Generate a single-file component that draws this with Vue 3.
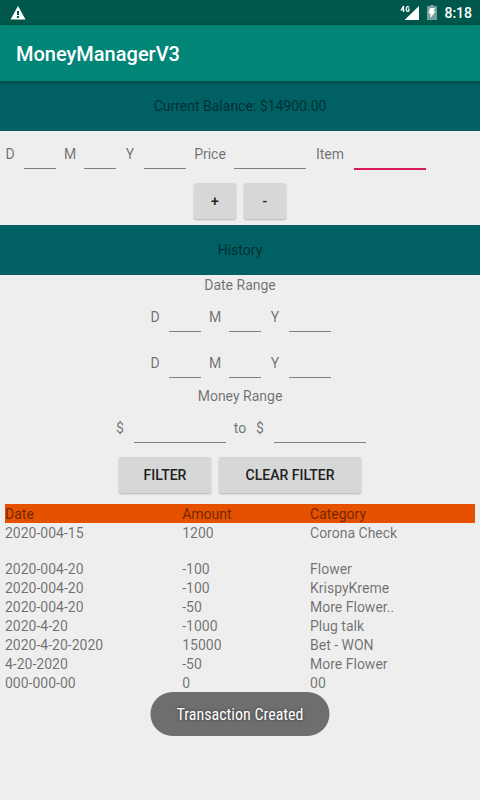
<script setup>
import { reactive } from 'vue'

const entry = reactive({ day: '', month: '', year: '', price: '', item: '' })
const entryFields = [
  { key: 'day', label: 'D', size: 'short' },
  { key: 'month', label: 'M', size: 'short' },
  { key: 'year', label: 'Y', size: 'year' },
  { key: 'price', label: 'Price', size: 'long' },
  { key: 'item', label: 'Item', size: 'long' },
]

const range = reactive({
  from: { day: '', month: '', year: '' },
  until: { day: '', month: '', year: '' },
  min: '',
  max: '',
})
const dateFields = entryFields.slice(0, 3)

const transactions = [
  { date: '2020-004-15', amount: '1200', category: 'Corona Check\n\u00a0' },
  { date: '2020-004-20', amount: '-100', category: 'Flower' },
  { date: '2020-004-20', amount: '-100', category: 'KrispyKreme' },
  { date: '2020-004-20', amount: '-50', category: 'More Flower..' },
  { date: '2020-4-20', amount: '-1000', category: 'Plug talk' },
  { date: '2020-4-20-2020', amount: '15000', category: 'Bet - WON' },
  { date: '4-20-2020', amount: '-50', category: 'More Flower' },
  { date: '000-000-00', amount: '0', category: '00' },
]
</script>

<template>
  <div class="screen">
    <div class="status">
      <svg class="warning" viewBox="0 0 16 14" width="16" height="14" aria-hidden="true">
        <path fill="#fff" fill-rule="evenodd" d="M8 0 15.5 13.5H.5ZM7 5v4h2V5ZM7 10v2h2v-2Z" />
      </svg>
      <div class="status-right">
        <svg class="signal" viewBox="0 0 20 16" width="20" height="16" aria-hidden="true">
          <path fill="#fff" d="M19 1v14H4.500Z" />
          <path fill="#00574b" d="M0 0H10.500V8H0Z" />
          <path fill="none" stroke="#fff" stroke-width="1.200" d="M3.500 7V1L1.300 5H4.800M9 2.500C8.300 1 6.200 1.200 6.200 4S8.300 6.900 9 5.600V4.200H7.700" />
        </svg>
        <svg class="battery" viewBox="0 0 10 16" width="10" height="16" aria-hidden="true">
          <path fill="#fff" fill-opacity=".45" d="M3 0h4v1h3v14H0V1h3Z" />
          <path fill="#fff" d="M3 3h5L6.500 6.500H8.500L3.500 13V8.500H1.500Z" />
        </svg>
        <time>8:18</time>
      </div>
    </div>
    <header class="app-bar"><h1>MoneyManagerV3</h1></header>

    <main>
      <div class="band">Current Balance: $14900.00</div>

      <form @submit.prevent>
        <div class="fields">
          <template v-for="field in entryFields" :key="field.key">
            <label :class="{ wide: field.size === 'long' }" :for="`entry-${field.key}`">{{ field.label }}</label>
            <input
              :id="`entry-${field.key}`"
              v-model="entry[field.key]"
              :class="[field.size, { active: field.key === 'item' }]"
              type="text"
            />
          </template>
        </div>
        <div class="actions">
          <button class="sign" type="button">+</button>
          <button class="sign" type="button">-</button>
        </div>
      </form>

      <h2 class="band">History</h2>

      <form @submit.prevent>
        <p class="caption">Date Range</p>
        <div v-for="edge in ['from', 'until']" :key="edge" class="fields centered">
          <template v-for="field in dateFields" :key="field.key">
            <label :for="`${edge}-${field.key}`">{{ field.label }}</label>
            <input :id="`${edge}-${field.key}`" v-model="range[edge][field.key]" :class="field.size" type="text" />
          </template>
        </div>
        <p class="caption">Money Range</p>
        <div class="fields centered">
          <label for="money-min">$</label>
          <input id="money-min" v-model="range.min" class="money" type="text" />
          <span class="word">to</span>
          <label for="money-max">$</label>
          <input id="money-max" v-model="range.max" class="money" type="text" />
        </div>
        <div class="actions">
          <button class="filter" type="submit">FILTER</button>
          <button class="clear" type="reset">CLEAR FILTER</button>
        </div>
      </form>

      <div class="history">
        <table>
          <thead>
            <tr>
              <th class="date" scope="col">Date</th>
              <th class="amount" scope="col">Amount</th>
              <th scope="col">Category</th>
            </tr>
          </thead>
          <tbody>
            <tr v-for="(row, index) in transactions" :key="index">
              <td>{{ row.date }}</td>
              <td>{{ row.amount }}</td>
              <td class="category">{{ row.category }}</td>
            </tr>
          </tbody>
        </table>
      </div>
    </main>

    <div class="toast" role="status">Transaction Created</div>
  </div>
</template>

<style>
body {
  margin: 0;
  background: #eee;
}
</style>

<style scoped>
.screen {
  min-height: 100vh;
  background: #eee;
  color: rgba(0, 0, 0, 0.54);
  font: 14px/17px Roboto, sans-serif;
}
.status {
  display: flex;
  align-items: center;
  justify-content: space-between;
  height: 25px;
  padding: 0 8px 0 10px;
  background: #00574b;
  color: #fff;
}
.status-right {
  display: flex;
  align-items: center;
  gap: 7px;
}
.status-right time {
  padding-top: 2px;
  font-weight: 500;
}
.app-bar {
  position: relative;
  display: flex;
  align-items: center;
  height: 56px;
  padding: 0 16px;
  background: #008577;
  color: #fff;
  box-shadow: 0 1px 4px rgba(0, 0, 0, 0.4);
}
h1 {
  margin: 0;
  padding-top: 2px;
  font-size: 20px;
  line-height: 24px;
  font-weight: 500;
}
.band {
  display: flex;
  align-items: center;
  justify-content: center;
  height: 50px;
  margin: 0;
  background: #006064;
  font-size: 14px;
  font-weight: 400;
}
.fields {
  display: flex;
  align-items: flex-start;
  height: 46px;
}
.centered {
  justify-content: center;
}
label,
.word {
  width: 20px;
  padding-top: 15px;
  text-align: center;
}
.wide {
  width: 40px;
}
input {
  box-sizing: border-box;
  height: 38px;
  margin: 0 4px;
  padding: 8px 0 4px;
  border: 0;
  border-bottom: 1px solid #808080;
  border-radius: 0;
  outline: 0;
  background: transparent;
  color: #212121;
  font: inherit;
}
.short {
  width: 32px;
}
.year {
  width: 42px;
}
.long {
  width: 72px;
}
.money {
  width: 92px;
}
.active {
  height: 39px;
  border-bottom: 2px solid #d81b60;
}
.caption {
  margin: 0;
  padding-top: 2px;
  text-align: center;
}
.actions {
  display: flex;
  justify-content: center;
  gap: 8px;
  padding: 6px 0;
}
button {
  height: 36px;
  padding: 0;
  border: 0;
  border-radius: 2px;
  background: #d6d7d7;
  box-shadow: 0 1px 2px rgba(0, 0, 0, 0.25);
  color: #212121;
  font: 500 14px/17px Roboto, sans-serif;
}
.sign {
  width: 42px;
}
.filter {
  width: 92px;
}
.clear {
  width: 142px;
}
.history {
  padding: 5px;
}
table {
  width: 100%;
  table-layout: fixed;
  border-collapse: collapse;
}
th,
td {
  padding: 2px 0 0;
  text-align: left;
  vertical-align: top;
  font-weight: 400;
}
thead {
  background: #e65100;
}
.date {
  width: 37.7%;
}
.amount {
  width: 27.2%;
}
.category {
  white-space: pre-line;
}
.toast {
  position: fixed;
  bottom: 64px;
  left: 50%;
  box-sizing: border-box;
  padding: 13px 26px 11px;
  border-radius: 22px;
  transform: translateX(-50%);
  background: #6e6e6e;
  color: #fff;
  font: 16px/20px "Roboto Condensed", Roboto, sans-serif;
  text-shadow: 0 0 3px rgba(0, 0, 0, 0.6);
  white-space: nowrap;
}
</style>
